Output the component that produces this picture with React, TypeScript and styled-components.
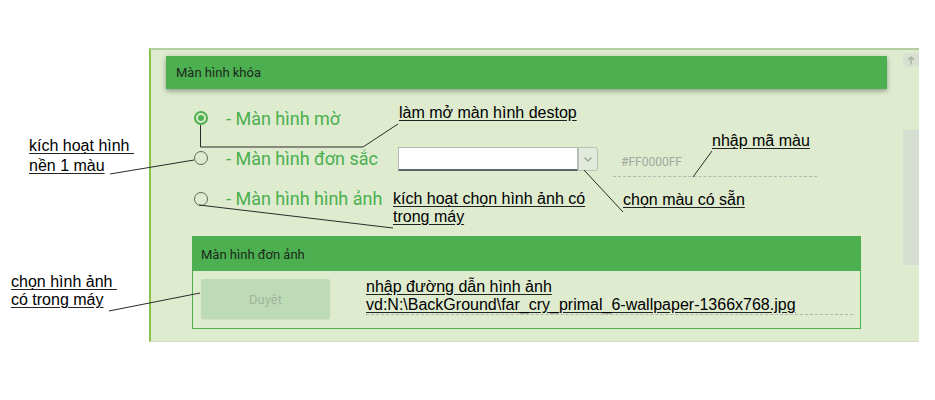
import React from "react";
import styled, { createGlobalStyle } from "styled-components";

const GlobalStyle = createGlobalStyle`
  html, body { margin: 0; padding: 0; background: #ffffff; }
  body { font-family: Roboto, "Noto Sans", sans-serif; }
  * { box-sizing: border-box; }
`;

const Page = styled.div`
  position: relative;
  width: 935px;
  height: 400px;
  padding: 48px 16px 0 149px;
  background: #ffffff;
  overflow: hidden;
`;

const Panel = styled.section`
  width: 770px;
  height: 294px;
  display: flex;
  background: #deebcf;
  border-top: 2px solid #b3cf9f;
  border-left: 2px solid #8bc34a;
  border-bottom: 1px solid #cfdcc3;
`;

const Content = styled.div`
  flex: 1;
  padding: 6px 16px 0 15px;
  display: flex;
  flex-direction: column;
`;

const Header = styled.div`
  height: 33px;
  display: flex;
  align-items: center;
  padding-left: 10px;
  background: #4caf50;
  color: #1d2a1c;
  font-size: 13px;
  box-shadow: 0 2px 5px rgba(0, 0, 0, 0.35);
`;

const Options = styled.div`
  display: flex;
  flex-direction: column;
  padding: 9px 0 0 28px;
`;

const Row = styled.div<{ $h: number }>`
  height: ${(p) => p.$h}px;
  display: flex;
  align-items: center;
`;

const Radio = styled.span<{ $checked?: boolean }>`
  width: 14px;
  height: 14px;
  border-radius: 50%;
  flex: none;
  display: flex;
  align-items: center;
  justify-content: center;
  border: ${(p) => (p.$checked ? "2px solid #4caf50" : "1.5px solid #5e6a59")};
  &::after {
    content: "";
    display: ${(p) => (p.$checked ? "block" : "none")};
    width: 6px;
    height: 6px;
    border-radius: 50%;
    background: #4caf50;
  }
`;

const OptionLabel = styled.span<{ $w?: number }>`
  margin-left: 18px;
  font-size: 18px;
  color: #4caf50;
  white-space: nowrap;
  ${(p) => (p.$w ? `width: ${p.$w}px;` : "")}
`;

const Select = styled.div`
  align-self: flex-start;
  margin-top: 9px;
  width: 200px;
  height: 24px;
  display: flex;
`;

const SelectBox = styled.div`
  flex: 1;
  background: #ffffff;
  border: 1px solid #b4b8b2;
  border-bottom: 2px solid #5c6470;
`;

const SelectButton = styled.div`
  width: 20px;
  display: flex;
  align-items: center;
  justify-content: center;
  background: #e2ebdb;
  border: 1px solid #b9c0b5;
  border-radius: 0 3px 3px 0;
`;

const ColorInput = styled.div`
  align-self: flex-start;
  margin-top: 9px;
  margin-left: 15px;
  width: 204px;
  height: 30px;
  display: flex;
  align-items: center;
  padding-left: 8px;
  color: #a3a8a0;
  font-size: 12px;
  border-bottom: 1px dashed #b2b8ae;
`;

const SubPanel = styled.div`
  margin: 17px 0 0 26px;
  width: 669px;
  height: 93px;
  border: 1px solid #4caf50;
  display: flex;
  flex-direction: column;
`;

const SubHeader = styled.div`
  height: 34px;
  display: flex;
  align-items: center;
  padding-left: 8px;
  background: #4caf50;
  color: #1d2a1c;
  font-size: 13px;
`;

const SubBody = styled.div`
  flex: 1;
  display: flex;
  padding: 8px 7px 0 8px;
`;

const BrowseButton = styled.div`
  width: 129px;
  height: 40px;
  display: flex;
  align-items: center;
  justify-content: center;
  background: #bddcb5;
  border-radius: 2px;
  color: #a1b59c;
  font-size: 13px;
  box-shadow: 0 1px 2px rgba(0, 0, 0, 0.06);
`;

const PathField = styled.div`
  flex: 1;
  margin-left: 36px;
  height: 37px;
  border-bottom: 1px dashed #b0b6ac;
  font-family: "Liberation Sans", Arial, sans-serif;
  font-size: 16px;
  line-height: 18px;
  color: #000;
  margin-top: -1px;
`;

const Underlined = styled.span`
  text-decoration: underline;
  text-decoration-color: #222;
  text-underline-offset: 2px;
  white-space: pre;
`;

const ScrollBar = styled.div`
  width: 16px;
  display: flex;
  flex-direction: column;
  align-items: stretch;
`;

const ScrollArrow = styled.div`
  margin-top: 3px;
  height: 14px;
  display: flex;
  align-items: center;
  justify-content: center;
  background: #d8e1d1;
`;

const ScrollThumb = styled.div`
  margin-top: 63px;
  height: 135px;
  background: #d6ddd1;
`;

const Note = styled.div<{ $x: number; $y: number; $lh?: number }>`
  position: absolute;
  left: ${(p) => p.$x}px;
  top: ${(p) => p.$y}px;
  font-family: "Liberation Sans", Arial, sans-serif;
  font-size: 16px;
  line-height: ${(p) => p.$lh ?? 18}px;
  color: #000;
  white-space: nowrap;
`;

const Lines = styled.svg`
  position: absolute;
  left: 0;
  top: 0;
  pointer-events: none;
`;

export default function App() {
  return (
    <Page>
      <GlobalStyle />
      <Panel>
        <Content>
          <Header>Màn hình khóa</Header>
          <Options>
            <Row $h={40}>
              <Radio $checked />
              <OptionLabel>- Màn hình mờ</OptionLabel>
            </Row>
            <Row $h={40}>
              <Radio />
              <OptionLabel $w={172}>- Màn hình đơn sắc</OptionLabel>
              <Select>
                <SelectBox />
                <SelectButton>
                  <svg width="8" height="5" viewBox="0 0 8 5">
                    <path d="M0.5 0.5 L4 4 L7.5 0.5" fill="none" stroke="#9aa096" strokeWidth="1.3" />
                  </svg>
                </SelectButton>
              </Select>
              <ColorInput>#FF0000FF</ColorInput>
            </Row>
            <Row $h={41}>
              <Radio />
              <OptionLabel>- Màn hình hình ảnh</OptionLabel>
            </Row>
          </Options>
          <SubPanel>
            <SubHeader>Màn hình đơn ảnh</SubHeader>
            <SubBody>
              <BrowseButton>Duyệt</BrowseButton>
              <PathField>
                <Underlined>nhập đường dẫn hình ảnh</Underlined>
                <br />
                <Underlined>vd:N:\BackGround\far_cry_primal_6-wallpaper-1366x768.jpg</Underlined>
              </PathField>
            </SubBody>
          </SubPanel>
        </Content>
        <ScrollBar>
          <ScrollArrow>
            <svg width="8" height="9" viewBox="0 0 8 9">
              <path d="M4 8.5 V1 M1 4 L4 1 L7 4" fill="none" stroke="#a9b0a4" strokeWidth="1.4" />
            </svg>
          </ScrollArrow>
          <ScrollThumb />
        </ScrollBar>
      </Panel>

      <Lines width="935" height="400" viewBox="0 0 935 400">
        <g fill="none" stroke="#2a2a2a" strokeWidth="1">
          <polyline points="200.5,125 200.5,147 363,147 398,124" />
          <line x1="110" y1="174" x2="194" y2="160" />
          <line x1="199" y1="205" x2="393" y2="228" />
          <line x1="584" y1="170" x2="623" y2="212" />
          <line x1="693" y1="177" x2="712" y2="151" />
          <line x1="109" y1="311" x2="200" y2="293" />
        </g>
      </Lines>

      <Note $x={399} $y={104}>
        <Underlined>làm mở màn hình destop</Underlined>
      </Note>
      <Note $x={29} $y={136} $lh={20}>
        <Underlined>kích hoạt hình </Underlined>
        <br />
        <Underlined>nền 1 màu</Underlined>
      </Note>
      <Note $x={393} $y={190}>
        <Underlined>kích hoạt chọn hình ảnh có</Underlined>
        <br />
        <Underlined>trong máy</Underlined>
      </Note>
      <Note $x={623} $y={191}>
        <Underlined>chọn màu có sẵn</Underlined>
      </Note>
      <Note $x={712} $y={132}>
        <Underlined>nhập mã màu</Underlined>
      </Note>
      <Note $x={11} $y={273}>
        <Underlined>chọn hình ảnh </Underlined>
        <br />
        <Underlined>có trong máy</Underlined>
      </Note>
    </Page>
  );
}
